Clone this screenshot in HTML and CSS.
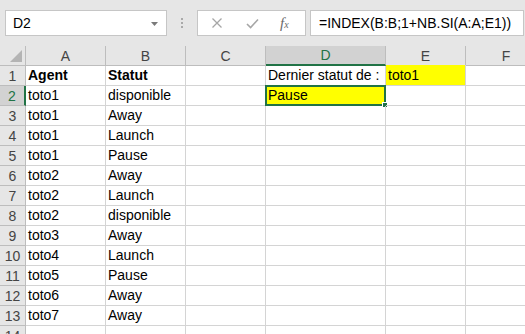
FILE: index.html
```html
<!DOCTYPE html>
<html>
<head>
<meta charset="utf-8">
<link rel="stylesheet" href="styles.css">
</head>
<body>
<div class="app">
  <div class="fbar">
    <div class="namebox">
      <span class="nb-text">D2</span>
      <svg class="caret" width="7" height="4" viewBox="0 0 7 4"><path d="M0 0H7L3.5 4Z" fill="#7a7a7a"/></svg>
    </div>
    <div class="grip"><i></i><i></i><i></i></div>
    <div class="btns">
      <svg class="ico" width="12" height="12" viewBox="0 0 12 12"><path d="M1.5 1.5L10.5 10.5M10.5 1.5L1.5 10.5" stroke="#a6a6a6" stroke-width="1.3" fill="none"/></svg>
      <svg class="ico ok" width="13" height="11" viewBox="0 0 13 11"><path d="M1 6L4.6 9.5L12 1.5" stroke="#a6a6a6" stroke-width="1.6" fill="none"/></svg>
      <span class="fx">f<sub>x</sub></span>
    </div>
    <div class="formula">=INDEX(B:B;1+NB.SI(A:A;E1))</div>
  </div>
  <div class="sheet">
    <div class="hd corner"><svg width="12" height="12" viewBox="0 0 12 12"><path d="M12 0V12H0Z" fill="#b4b4b4"/></svg></div>
    <div class="hd col">A</div>
    <div class="hd col">B</div>
    <div class="hd col">C</div>
    <div class="hd col sel">D</div>
    <div class="hd col">E</div>
    <div class="hd col last">F</div>

    <div class="hd row">1</div><div class="c b">Agent</div><div class="c b">Statut</div><div class="c"></div><div class="c">Dernier statut de :</div><div class="c y">toto1</div><div class="c last"></div>
    <div class="hd row rsel">2</div><div class="c">toto1</div><div class="c">disponible</div><div class="c"></div><div class="c active"><span>Pause</span><i class="handle"></i></div><div class="c"></div><div class="c last"></div>
    <div class="hd row">3</div><div class="c">toto1</div><div class="c">Away</div><div class="c"></div><div class="c"></div><div class="c"></div><div class="c last"></div>
    <div class="hd row">4</div><div class="c">toto1</div><div class="c">Launch</div><div class="c"></div><div class="c"></div><div class="c"></div><div class="c last"></div>
    <div class="hd row">5</div><div class="c">toto1</div><div class="c">Pause</div><div class="c"></div><div class="c"></div><div class="c"></div><div class="c last"></div>
    <div class="hd row">6</div><div class="c">toto2</div><div class="c">Away</div><div class="c"></div><div class="c"></div><div class="c"></div><div class="c last"></div>
    <div class="hd row">7</div><div class="c">toto2</div><div class="c">Launch</div><div class="c"></div><div class="c"></div><div class="c"></div><div class="c last"></div>
    <div class="hd row">8</div><div class="c">toto2</div><div class="c">disponible</div><div class="c"></div><div class="c"></div><div class="c"></div><div class="c last"></div>
    <div class="hd row">9</div><div class="c">toto3</div><div class="c">Away</div><div class="c"></div><div class="c"></div><div class="c"></div><div class="c last"></div>
    <div class="hd row">10</div><div class="c">toto4</div><div class="c">Launch</div><div class="c"></div><div class="c"></div><div class="c"></div><div class="c last"></div>
    <div class="hd row">11</div><div class="c">toto5</div><div class="c">Pause</div><div class="c"></div><div class="c"></div><div class="c"></div><div class="c last"></div>
    <div class="hd row">12</div><div class="c">toto6</div><div class="c">Away</div><div class="c"></div><div class="c"></div><div class="c"></div><div class="c last"></div>
    <div class="hd row">13</div><div class="c">toto7</div><div class="c">Away</div><div class="c"></div><div class="c"></div><div class="c"></div><div class="c last"></div>
    <div class="hd row">14</div><div class="c"></div><div class="c"></div><div class="c"></div><div class="c"></div><div class="c"></div><div class="c last"></div>
  </div>
</div>
</body>
</html>
```
FILE: styles.css
```css
* { box-sizing: border-box; }
html, body { margin: 0; padding: 0; }
body {
  width: 525px;
  height: 334px;
  overflow: hidden;
  background: #ffffff;
  font-family: "Liberation Sans", Arial, sans-serif;
  font-size: 14px;
  color: #000;
}
.app { width: 525px; height: 334px; overflow: hidden; }
.fbar {
  height: 46px;
  background: #e6e6e6;
  display: flex;
  align-items: flex-start;
  padding-top: 10px;
  padding-left: 5px;
}
.namebox {
  width: 162px;
  height: 26px;
  background: #fff;
  border: 1px solid #c6c6c6;
  display: flex;
  align-items: center;
  justify-content: space-between;
  padding: 0 8px 0 7px;
  color: #000;
  font-size: 14px;
}
.caret { margin-top: 1px; }
.grip {
  width: 30px;
  height: 26px;
  display: flex;
  flex-direction: column;
  align-items: center;
  justify-content: center;
  gap: 2px;
}
.grip i { display: block; width: 2px; height: 2px; background: #a9a9a9; }
.btns {
  width: 109px;
  height: 26px;
  background: #fff;
  border: 1px solid #c6c6c6;
  display: flex;
  align-items: center;
  padding-left: 13px;
}
.ico.ok { margin-left: 23px; }
.fx {
  margin-left: 21px;
  font-family: "Liberation Serif", "Times New Roman", serif;
  font-style: italic;
  font-size: 15px;
  color: #6a6a6a;
  line-height: 1;
}
.fx sub { font-size: 10px; vertical-align: 0; margin-left: 0; }
.formula {
  margin-left: 4px;
  width: 214px;
  height: 26px;
  background: #fff;
  border: 1px solid #c6c6c6;
  display: flex;
  align-items: center;
  padding-left: 8px;
  font-size: 14px;
  white-space: nowrap;
  overflow: hidden;
}
.sheet {
  display: grid;
  grid-template-columns: 26px 80px 80px 80px 120px 80px 80px;
  grid-auto-rows: 20px;
}
.hd {
  background: #e6e6e6;
  color: #444;
  display: flex;
  align-items: center;
  justify-content: center;
  font-size: 14px;
}
.col {
  border-right: 1px solid #bdbdbd;
  border-bottom: 1px solid #bdbdbd;
}
.col.last { border-right: none; }
.col.sel {
  background: #d2d2d2;
  color: #217346;
  border-bottom: 2px solid #217346;
}
.corner {
  border-right: 1px solid #bdbdbd;
  border-bottom: 1px solid #bdbdbd;
  justify-content: flex-end;
  align-items: flex-end;
  padding: 0 3px 3px 0;
}
.corner svg { display: block; }
.row {
  border-right: 1px solid #bdbdbd;
  border-bottom: 1px solid #bdbdbd;
}
.row.rsel {
  background: #d2d2d2;
  color: #217346;
  border-right: 2px solid #217346;
}
.c {
  border-right: 1px solid #d4d4d4;
  border-bottom: 1px solid #d4d4d4;
  padding-left: 2px;
  display: flex;
  align-items: flex-end;
  padding-bottom: 1px;
  white-space: nowrap;
  line-height: 17px;
  position: relative;
}
.c.last { border-right: none; }
.c.b { font-weight: bold; }
.c.y { background: #ffff00; margin-top: -1px; }
.c.active {
  background: #ffff00;
  margin: -1px 0 0 -1px;
  border: 2px solid #217346;
  padding-left: 1px;
  padding-bottom: 0;
}
.handle {
  position: absolute;
  right: -4px;
  bottom: -4px;
  width: 6px;
  height: 6px;
  background: #217346;
  border: 1px solid #fff;
}
```
